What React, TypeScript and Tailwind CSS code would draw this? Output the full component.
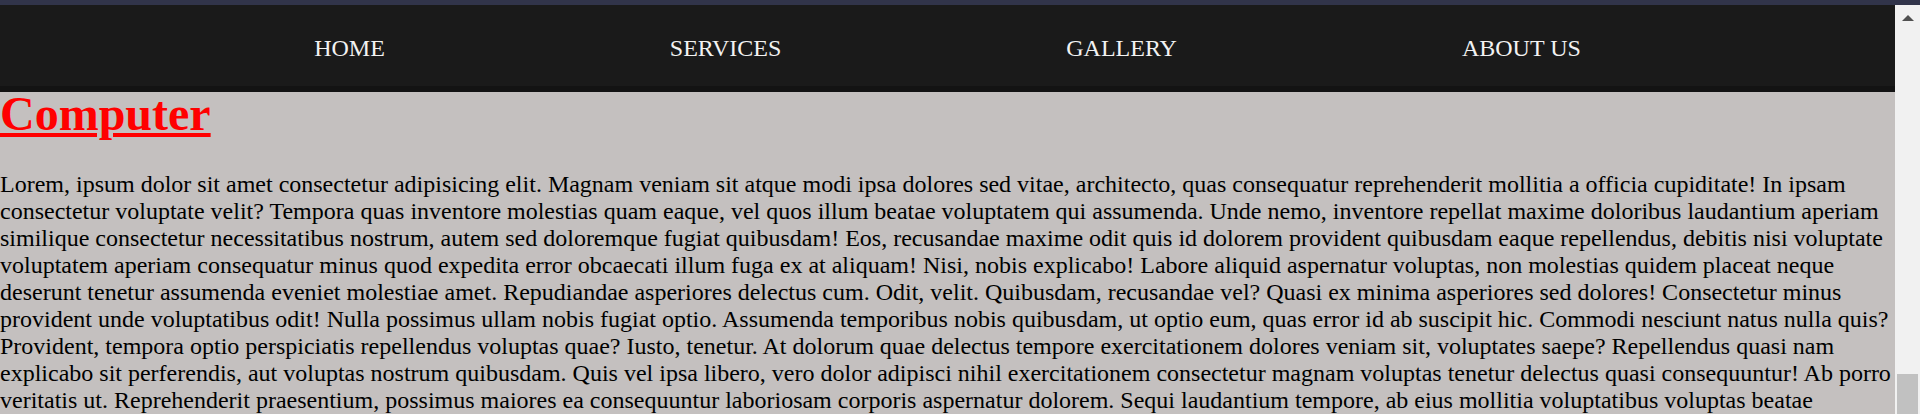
const links = ["HOME", "SERVICES", "GALLERY", "ABOUT US"];

const text =
  "Lorem, ipsum dolor sit amet consectetur adipisicing elit. Magnam veniam sit atque modi ipsa dolores sed vitae, architecto, quas consequatur reprehenderit mollitia a officia cupiditate! In ipsam consectetur voluptate velit? Tempora quas inventore molestias quam eaque, vel quos illum beatae voluptatem qui assumenda. Unde nemo, inventore repellat maxime doloribus laudantium aperiam similique consectetur necessitatibus nostrum, autem sed doloremque fugiat quibusdam! Eos, recusandae maxime odit quis id dolorem provident quibusdam eaque repellendus, debitis nisi voluptate voluptatem aperiam consequatur minus quod expedita error obcaecati illum fuga ex at aliquam! Nisi, nobis explicabo! Labore aliquid aspernatur voluptas, non molestias quidem placeat neque deserunt tenetur assumenda eveniet molestiae amet. Repudiandae asperiores delectus cum. Odit, velit. Quibusdam, recusandae vel? Quasi ex minima asperiores sed dolores! Consectetur minus provident unde voluptatibus odit! Nulla possimus ullam nobis fugiat optio. Assumenda temporibus nobis quibusdam, ut optio eum, quas error id ab suscipit hic. Commodi nesciunt natus nulla quis? Provident, tempora optio perspiciatis repellendus voluptas quae? Iusto, tenetur. At dolorum quae delectus tempore exercitationem dolores veniam sit, voluptates saepe? Repellendus quasi nam explicabo sit perferendis, aut voluptas nostrum quibusdam. Quis vel ipsa libero, vero dolor adipisci nihil exercitationem consectetur magnam voluptas tenetur delectus quasi consequuntur! Ab porro veritatis ut. Reprehenderit praesentium, possimus maiores ea consequuntur laboriosam corporis aspernatur dolorem. Sequi laudantium tempore, ab eius mollitia voluptatibus voluptas beatae consequatur, quibusdam dolores nesciunt sapiente fugit error, eos officia quo natus deleniti.";

export default function App() {
  return (
    <div className="h-[414px] overflow-hidden flex flex-col bg-[#31344a] font-['Liberation_Serif','Times_New_Roman',serif]">
      <div className="h-[5px] shrink-0" />
      <div className="flex flex-1 min-h-0">
        <div className="flex-1 min-w-0 flex flex-col bg-[#c4c0bf]">
          <nav className="h-[87px] shrink-0 bg-[#1a1a1a] border-b-[6px] border-[#131313]">
            <ul className="flex justify-center gap-[285px] pt-[30px]">
              {links.map((l) => (
                <li key={l}>
                  <a href="#" className="text-[24px] leading-[27px] text-[#f2f2f2]">
                    {l}
                  </a>
                </li>
              ))}
            </ul>
          </nav>
          <h1 className="text-[48px] leading-[43px] font-bold">
            <a href="#" className="text-[#ff0000] underline">
              Computer
            </a>
          </h1>
          <p className="mt-[36px] text-[24px] leading-[27px] text-black">{text}</p>
        </div>
        <div className="w-[25px] shrink-0 bg-[#f1f1f1] flex flex-col items-center">
          <div className="mt-[10px] w-0 h-0 border-l-[6px] border-r-[6px] border-b-[6px] border-l-transparent border-r-transparent border-b-[#505050]" />
          <div className="mt-auto w-[21px] h-[40px] bg-[#c1c1c1]" />
        </div>
      </div>
    </div>
  );
}
